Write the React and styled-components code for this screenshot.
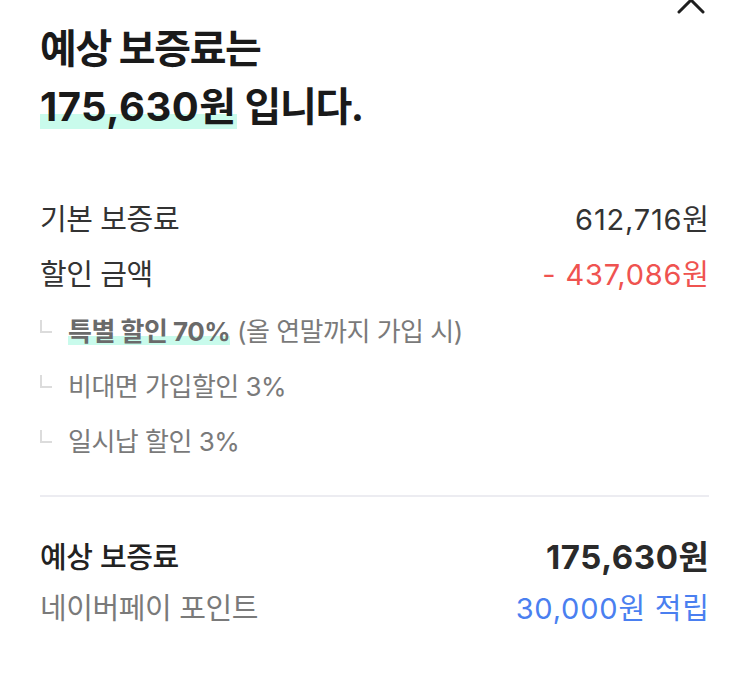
import React from "react";
import styled, { createGlobalStyle } from "styled-components";

const Global = createGlobalStyle`
  html, body { margin: 0; padding: 0; background: #fff; }
  body { font-family: "Inter", "Noto Sans CJK KR", sans-serif; color: #222; }
  * { box-sizing: border-box; }
`;

const Sheet = styled.div`
  position: relative;
  width: 750px;
  height: 680px;
  padding: 20px 41px 0 40px;
  overflow: hidden;
  background: #fff;
`;

const CloseButton = styled.button`
  position: absolute;
  top: -14px;
  right: 45px;
  width: 28px;
  height: 28px;
  padding: 0;
  border: 0;
  background: transparent;
  display: flex;
  align-items: center;
  justify-content: center;
`;

const Title = styled.h1`
  margin: 0;
  font-size: 40px;
  line-height: 58px;
  font-weight: 700;
  letter-spacing: -1.4px;
  color: #1a1a1a;
`;

const Highlight = styled.span`
  letter-spacing: ${(p) => (p.$ls != null ? `${p.$ls}px` : "inherit")};
  background: linear-gradient(
    to bottom,
    transparent 0,
    transparent 65%,
    #c9fbec 65%,
    #c9fbec 95%,
    transparent 95%
  );
`;

const List = styled.div`
  margin-top: 53px;
  display: flex;
  flex-direction: column;
`;

const Row = styled.div`
  display: flex;
  justify-content: space-between;
  align-items: center;
  height: ${(p) => p.$h || 55}px;
  font-size: 29px;
  letter-spacing: -0.4px;
`;

const Label = styled.span`
  color: ${(p) => p.$color || "#333"};
  font-weight: ${(p) => p.$weight || 400};
`;

const Value = styled.span`
  color: ${(p) => p.$color || "#333"};
  font-weight: ${(p) => p.$weight || 400};
  font-size: ${(p) => p.$size || 29}px;
  letter-spacing: ${(p) => (p.$ls != null ? p.$ls : 0.8)}px;
  margin-right: -${(p) => (p.$ls != null ? p.$ls : 0.8)}px;
`;

const SubList = styled.div`
  margin-top: 3px;
  display: flex;
  flex-direction: column;
`;

const SubRow = styled.div`
  display: flex;
  align-items: center;
  height: 55px;
  font-size: 26px;
  letter-spacing: -0.5px;
  color: #7a7a7a;
  white-space: pre;
`;

const Branch = styled.span`
  display: inline-block;
  width: 12px;
  height: 13px;
  margin: 0 16px 6px 0;
  border-left: 2px solid #dcdcdc;
  border-bottom: 2px solid #dcdcdc;
`;

const Strong = styled.strong`
  font-weight: 700;
  color: #6a6a6a;
`;

const Divider = styled.hr`
  margin: 28px 0 0;
  border: 0;
  height: 2px;
  background: #ececf1;
`;

const Summary = styled.div`
  margin-top: 32px;
  display: flex;
  flex-direction: column;
`;

export default function App() {
  return (
    <>
      <Global />
      <Sheet>
        <CloseButton aria-label="닫기">
          <svg width="28" height="28" viewBox="0 0 28 28">
            <path
              d="M2 2 L26 26 M26 2 L2 26"
              stroke="#1f1f1f"
              strokeWidth="3"
              strokeLinecap="round"
              fill="none"
            />
          </svg>
        </CloseButton>
        <Title>
          예상 보증료는
          <br />
          <Highlight $ls={0.5}>175,630원</Highlight> 입니다.
        </Title>

        <List>
          <Row>
            <Label>기본 보증료</Label>
            <Value>612,716원</Value>
          </Row>
          <Row>
            <Label>할인 금액</Label>
            <Value $color="#ef5350">- 437,086원</Value>
          </Row>
          <SubList>
            <SubRow>
              <Branch />
              <Strong>
                <Highlight>특별 할인 70%</Highlight>
              </Strong>
              {" (올 연말까지 가입 시)"}
            </SubRow>
            <SubRow>
              <Branch />
              비대면 가입할인 3%
            </SubRow>
            <SubRow>
              <Branch />
              일시납 할인 3%
            </SubRow>
          </SubList>
        </List>

        <Divider />

        <Summary>
          <Row $h={51}>
            <Label $color="#222" $weight={500}>예상 보증료</Label>
            <Value $color="#2a2a2a" $weight={700} $size={33} $ls={0.6}>
              175,630원
            </Value>
          </Row>
          <Row $h={51}>
            <Label $color="#7a7a7a">네이버페이 포인트</Label>
            <Value $color="#4a7ff0">30,000원 적립</Value>
          </Row>
        </Summary>
      </Sheet>
    </>
  );
}
